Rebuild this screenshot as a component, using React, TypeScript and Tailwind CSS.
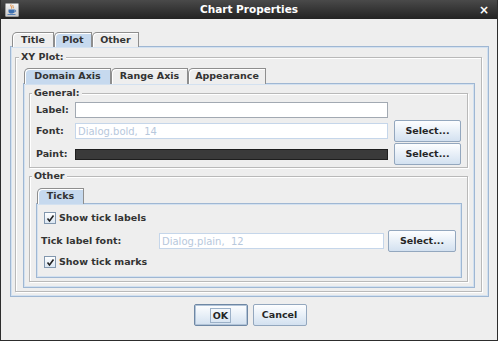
function Tab({ label, active, w }: { label: string; active?: boolean; w: number }) {
  return (
    <div
      style={{ width: w }}
      className={
        "relative flex h-full items-center justify-center rounded-tl-[5px] border-x border-t border-[#8e8e8e] shadow-[inset_1px_1px_0_#ffffff] " +
        (active ? "z-10 bg-[#c6d9ee]" : "bg-[#eeeeee]")
      }
    >
      {label}
    </div>
  );
}

function TabPanel({ children, className = "" }: { children: React.ReactNode; className?: string }) {
  return (
    <div className={"border border-[#9fb7d3] shadow-[inset_0_0_0_1px_#d3e1f0] " + className}>{children}</div>
  );
}

function Group({ title, children, className = "" }: { title: string; children: React.ReactNode; className?: string }) {
  return (
    <fieldset className={"border border-[#b9b9b9] shadow-[inset_1px_1px_0_#ffffff,1px_1px_0_#ffffff] " + className}>
      <legend className="relative -ml-[4px] bg-[#eeeeee] px-[2px] leading-[14px]">{title}</legend>
      {children}
    </fieldset>
  );
}

function Btn({ label, w, focus }: { label: string; w: number; focus?: boolean }) {
  return (
    <div
      style={{ width: w }}
      className={
        "flex h-[22px] shrink-0 items-center justify-center rounded-[2px] border bg-gradient-to-b from-[#fdfeff] to-[#d3e1f0] text-[#262626] " +
        (focus ? "border-[#6e87a4] shadow-[inset_0_0_0_1px_#b2c4d8]" : "border-[#93a7be]")
      }
    >
      <span className={focus ? "border border-[#9bb0c7] px-[2px] leading-[13px]" : ""}>{label}</span>
    </div>
  );
}

function Check({ label }: { label: string }) {
  return (
    <div className="ml-[3px] flex h-[14px] items-center gap-[3px]">
      <div className="flex h-[12px] w-[12px] items-center justify-center border border-[#8297ae] bg-gradient-to-b from-[#ffffff] to-[#dbe6f2]">
        <svg width="9" height="9" viewBox="0 0 9 9">
          <path d="M1.5 4.5 L3.5 7 L7.5 1.5" fill="none" stroke="#222" strokeWidth="1.6" />
        </svg>
      </div>
      <span>{label}</span>
    </div>
  );
}

function JavaIcon() {
  return (
    <div className="flex h-[14px] w-[14px] items-center justify-center rounded-[1px] border border-[#9a9a9a] bg-gradient-to-b from-[#f4f4f4] to-[#c9c9c9]">
      <svg width="10" height="11" viewBox="0 0 10 11">
        <path d="M4 0.5 C3 2 5.5 3 4.5 4.5" fill="none" stroke="#e07a1f" strokeWidth="1" />
        <path d="M6 1 C5.2 2.2 7 3 6.3 4.3" fill="none" stroke="#e07a1f" strokeWidth="0.8" />
        <path d="M1.5 5.5 H7.5 V7.5 C7.5 9 6 9.6 4.5 9.6 C3 9.6 1.5 9 1.5 7.5 Z" fill="#3c6fb0" />
        <path d="M7.5 6 C9.3 6 9.3 8 7.3 8" fill="none" stroke="#3c6fb0" strokeWidth="0.9" />
        <path d="M0.5 10.5 H8.5" stroke="#3c6fb0" strokeWidth="0.8" />
      </svg>
    </div>
  );
}

export default function App() {
  return (
    <div className="flex h-[341px] w-[498px] flex-col border-x border-b border-[#2d2d2d] bg-[#eeeeee] font-['DejaVu_Sans',sans-serif] text-[9.5px] font-bold text-[#333333]">
      {/* title bar */}
      <div className="grid h-[19px] shrink-0 grid-cols-[60px_1fr_60px] items-center bg-gradient-to-b from-[#4a4a4a] to-[#232323] text-[10.5px] text-white">
        <div className="pl-[4px]">
          <JavaIcon />
        </div>
        <div className="text-center">Chart Properties</div>
        <div className="pr-[8px] text-right text-[12px]">×</div>
      </div>

      <div className="flex flex-col pl-[9px] pr-[8px]">
        {/* outer tabs */}
        <div className="relative z-10 -mb-px mt-[13px] flex h-[15px] pl-[2px]">
          <Tab label="Title" w={42} />
          <Tab label="Plot" w={38} active />
          <Tab label="Other" w={47} />
        </div>
        <TabPanel className="px-[4px] pb-[4px] pt-[3px] pr-[6px]">
          <Group title="XY Plot:" className="pl-[7px] pr-[6px] pb-[3px] pt-[4px]">
            <div className="relative z-10 -mb-px flex h-[16px] pl-[1px]">
              <Tab label="Domain Axis" w={87} active />
              <Tab label="Range Axis" w={77} />
              <Tab label="Appearance" w={78} />
            </div>
            <TabPanel className="pl-[5px] pr-[6px] pt-[2px] pb-[5px]">
              <Group title="General:" className="pl-[6px] pr-[6px] pb-[2px]">
                <div className="mt-[2px] flex h-[16px] items-center">
                  <span className="w-[39px] shrink-0">Label:</span>
                  <div className="h-[16px] w-[313px] border border-[#a2a9b2] bg-white" />
                </div>
                <div className="mt-[2px] flex h-[22px] items-center">
                  <span className="w-[39px] shrink-0">Font:</span>
                  <div className="flex h-[16px] w-[313px] items-center border border-[#c5d6ea] bg-white pl-[2px] text-[10px] font-normal text-[#b7c8dc]">
                    Dialog.bold,&nbsp; 14
                  </div>
                  <div className="ml-[6px]">
                    <Btn label="Select..." w={67} />
                  </div>
                </div>
                <div className="mt-[1px] flex h-[22px] items-center">
                  <span className="w-[39px] shrink-0">Paint:</span>
                  <div className="h-[11px] w-[313px] border border-[#1e1e1e] bg-[#3a3a3a]" />
                  <div className="ml-[6px]">
                    <Btn label="Select..." w={67} />
                  </div>
                </div>
              </Group>
              <Group title="Other" className="mt-[1px] pl-[6px] pr-[5px] pb-[3px] pt-[5px]">
                <div className="relative z-10 -mb-px flex h-[16px] pl-[1px]">
                  <Tab label="Ticks" w={47} active />
                </div>
                <TabPanel className="pl-[4px] pr-[4px] pt-[7px] pb-[8px]">
                  <Check label="Show tick labels" />
                  <div className="mt-[5px] flex h-[22px] items-center">
                    <span className="w-[118px] shrink-0">Tick label font:</span>
                    <div className="flex h-[16px] w-[225px] items-center border border-[#c5d6ea] bg-white pl-[2px] text-[10px] font-normal text-[#b7c8dc]">
                      Dialog.plain,&nbsp; 12
                    </div>
                    <div className="ml-[4px]">
                      <Btn label="Select..." w={68} />
                    </div>
                  </div>
                  <div className="mt-[3px]">
                    <Check label="Show tick marks" />
                  </div>
                </TabPanel>
              </Group>
            </TabPanel>
          </Group>
        </TabPanel>

        {/* dialog buttons */}
        <div className="mt-[7px] flex justify-center gap-[5px] pl-[1px]">
          <Btn label="OK" w={54} focus />
          <Btn label="Cancel" w={54} />
        </div>
      </div>
    </div>
  );
}
